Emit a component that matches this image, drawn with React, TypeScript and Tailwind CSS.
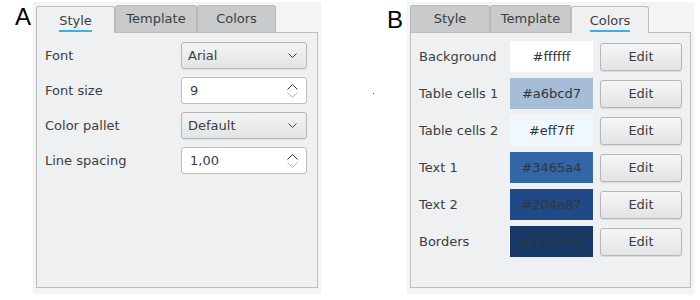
import React from "react";

const font = { fontFamily: '"DejaVu Sans", Verdana, sans-serif' };

function Chevron({ up = false, className = "" }: { up?: boolean; className?: string }) {
    return (
        <svg width="9" height="5" viewBox="0 0 9 5" className={className}>
            <polyline
                points={up ? "0.5,4.5 4.5,0.5 8.5,4.5" : "0.5,0.5 4.5,4.5 8.5,0.5"}
                fill="none"
                stroke="currentColor"
                strokeWidth="1"
            />
        </svg>
    );
}

function Tab({ label, active, className }: { label: string; active?: boolean; className: string }) {
    if (active) {
        return (
            <div className={`${className} relative z-10 mt-px h-[27px] bg-[#eff0f1] border border-b-0 border-[#bcbdbf] rounded-t-[3px] flex items-center justify-center`}>
                <span className="relative text-[#3a3e42] leading-none">
                    {label}
                    <span className="absolute left-0 right-0 -bottom-[5px] h-[1.5px] bg-[#3daee9]" />
                </span>
            </div>
        );
    }
    return (
        <div className={`${className} h-[27px] bg-[#c9cacb] border border-b-0 border-[#b7b8b9] rounded-t-[3px] flex items-center justify-center text-[#3a3e42]`}>
            {label}
        </div>
    );
}

function Combo({ value }: { value: string }) {
    return (
        <div className="w-[126px] h-[27px] rounded-[3px] border border-[#b5b6b7] bg-gradient-to-b from-[#f4f4f4] to-[#e3e4e5] shadow-[0_1px_1px_rgba(0,0,0,0.08)] flex items-center justify-between pl-[6px] pr-[9px] text-[#3a3e42]">
            <span>{value}</span>
            <Chevron />
        </div>
    );
}

function Spin({ value }: { value: string }) {
    return (
        <div className="w-[126px] h-[27px] rounded-[3px] border border-[#bcbdbe] bg-white flex items-center justify-between pl-[8px] pr-[8px] text-[#3a3e42]">
            <span>{value}</span>
            <div className="flex flex-col gap-[2px]">
                <svg width="11" height="6" viewBox="0 0 11 6" className="text-[#31363b]">
                    <polyline points="0.5,5.5 5.5,0.5 10.5,5.5" fill="none" stroke="currentColor" strokeWidth="1" />
                </svg>
                <svg width="11" height="6" viewBox="0 0 11 6" className="text-[#b4b5b6]">
                    <polyline points="0.5,0.5 5.5,5.5 10.5,0.5" fill="none" stroke="currentColor" strokeWidth="1" />
                </svg>
            </div>
        </div>
    );
}

function EditButton() {
    return (
        <div className="w-[82px] h-[28px] rounded-[3px] border border-[#b5b6b7] bg-gradient-to-b from-[#f6f6f6] to-[#e2e3e4] shadow-[0_1px_1px_rgba(0,0,0,0.1)] flex items-center justify-center text-[#3a3e42]">
            Edit
        </div>
    );
}

const styleRows: { label: string; kind: "combo" | "spin"; value: string }[] = [
    { label: "Font", kind: "combo", value: "Arial" },
    { label: "Font size", kind: "spin", value: "9" },
    { label: "Color pallet", kind: "combo", value: "Default" },
    { label: "Line spacing", kind: "spin", value: "1,00" },
];

const colorRows = [
    { label: "Background", hex: "#ffffff" },
    { label: "Table cells 1", hex: "#a6bcd7" },
    { label: "Table cells 2", hex: "#eff7ff" },
    { label: "Text 1", hex: "#3465a4" },
    { label: "Text 2", hex: "#204a87" },
    { label: "Borders", hex: "#173764" },
];

export default function App() {
    return (
        <div className="w-[700px] h-[300px] bg-white flex text-[13px]" style={font}>
            {/* Panel A */}
            <div
                className="ml-[15px] mt-[5px] w-[18px] text-[24px] leading-[24px] text-black"
                style={{ fontFamily: '"Liberation Sans", Arial, sans-serif' }}
            >
                A
            </div>
            <div className="mt-[2px] w-[288px] h-[291px] bg-[#f4f4f5] pt-[3px] px-[3px] shadow-[0_1px_2px_rgba(0,0,0,0.06)]">
                <div className="flex items-start h-[28px]">
                    <Tab label="Style" active className="w-[79px]" />
                    <Tab label="Template" className="w-[82px]" />
                    <Tab label="Colors" className="w-[79px]" />
                </div>
                <div className="-mt-px w-[282px] h-[256px] border border-[#bcbdbf] bg-[#eff0f1] pt-[9px] pl-[8px] pr-[10px] flex flex-col gap-[8px]">
                    {styleRows.map((r) => (
                        <div key={r.label} className="h-[27px] flex items-center justify-between text-[#3a3e42]">
                            <span>{r.label}</span>
                            {r.kind === "combo" ? <Combo value={r.value} /> : <Spin value={r.value} />}
                        </div>
                    ))}
                </div>
            </div>

            {/* stray dot */}
            <div className="w-[66px]">
                <div className="mt-[93px] ml-[52px] w-px h-px bg-[#555]" />
            </div>

            {/* Panel B */}
            <div
                className="mt-[8px] w-[20px] text-[24px] leading-[24px] text-black"
                style={{ fontFamily: '"Liberation Sans", Arial, sans-serif' }}
            >
                B
            </div>
            <div className="mt-[2px] w-[287px] h-[291px] bg-[#f4f4f5] pt-[3px] px-[3px] shadow-[0_1px_2px_rgba(0,0,0,0.06)]">
                <div className="flex items-start h-[28px]">
                    <Tab label="Style" className="w-[80px]" />
                    <Tab label="Template" className="w-[81px]" />
                    <Tab label="Colors" active className="w-[78px]" />
                </div>
                <div className="-mt-px w-[281px] h-[256px] border border-[#bcbdbf] bg-[#eff0f1] pt-[8px] pl-[8px] pr-[8px] flex flex-col gap-[6px]">
                    {colorRows.map((r) => (
                        <div key={r.label} className="h-[31px] flex items-center text-[#3a3e42]">
                            <span className="flex-1">{r.label}</span>
                            <div
                                className="w-[83px] h-[31px] flex items-center justify-center text-[#31363b]"
                                style={{ backgroundColor: r.hex }}
                            >
                                {r.hex}
                            </div>
                            <div className="ml-[7px]">
                                <EditButton />
                            </div>
                        </div>
                    ))}
                </div>
            </div>
        </div>
    );
}
